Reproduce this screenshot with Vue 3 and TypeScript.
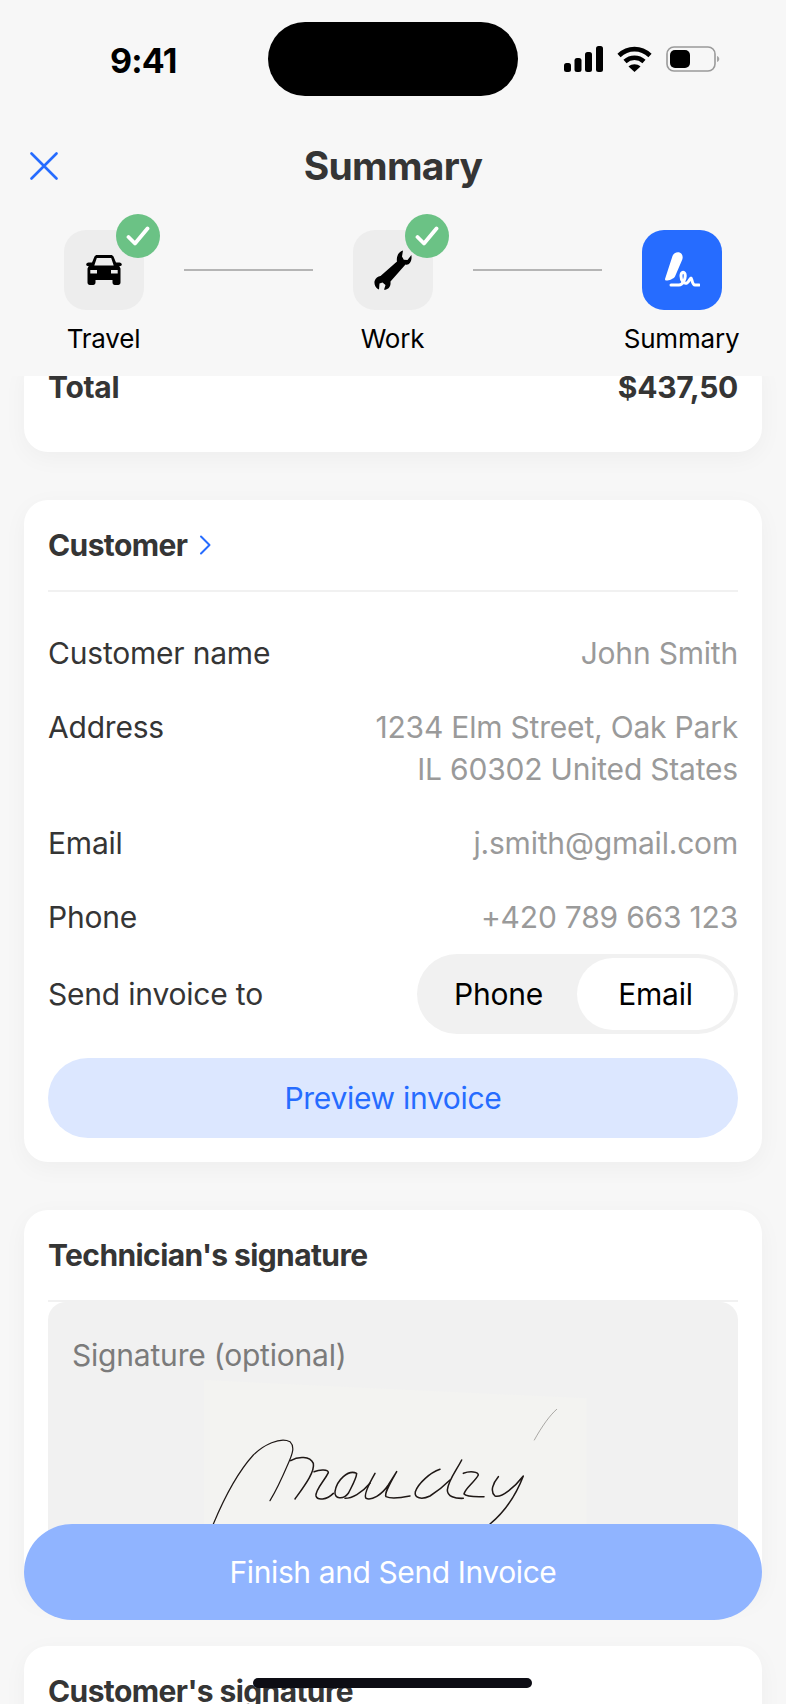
<script setup lang="ts">
interface Step {
  label: string
  done: boolean
}

interface InfoRow {
  label: string
  lines: string[]
}

const steps: Step[] = [
  { label: 'Travel', done: true },
  { label: 'Work', done: true },
  { label: 'Summary', done: false },
]

const customerRows: InfoRow[] = [
  { label: 'Customer name', lines: ['John Smith'] },
  { label: 'Address', lines: ['1234 Elm Street, Oak Park', 'IL 60302 United States'] },
  { label: 'Email', lines: ['j.smith@gmail.com'] },
  { label: 'Phone', lines: ['+420 789 663 123'] },
]
</script>

<template>
  <div class="screen">
    <header class="top">
      <div class="status">
        <span class="status__time">9:41</span>
        <div class="status__island"></div>
        <div class="status__icons">
          <svg width="39" height="26" viewBox="0 0 39 26" fill="#000">
            <rect x="0" y="17" width="7" height="9" rx="2.5" />
            <rect x="10.5" y="12" width="7" height="14" rx="2.5" />
            <rect x="21" y="6" width="7" height="20" rx="2.5" />
            <rect x="32" y="0" width="7" height="26" rx="2.5" />
          </svg>
          <svg width="35" height="26" viewBox="0 0 35 26" fill="none" stroke="#000" stroke-width="4.6">
            <path d="M2 9.5C11 1 24 1 33 9.5" />
            <path d="M8 15.5C13.5 10.5 21.5 10.5 27 15.5" />
            <path d="M17.5 26L11.5 20.5C15 17.5 20 17.5 23.5 20.500Z" fill="#000" stroke="none" />
          </svg>
          <svg width="55" height="26" viewBox="0 0 55 26" fill="none">
            <rect x="1" y="1" width="48" height="24" rx="7" stroke="#9a9a9a" stroke-width="1.6" fill="none" />
            <rect x="4" y="4" width="20" height="18" rx="5" fill="#000" />
            <path d="M51 10C54 11 54 15 51 16Z" fill="#a5a5a5" />
          </svg>
        </div>
      </div>

      <div class="nav">
        <svg class="nav__close" width="28" height="28" viewBox="0 0 28 28" fill="none" stroke="#266cff" stroke-width="2.6" stroke-linecap="round">
          <path d="M1.500 1.500L26.500 26.500M26.500 1.500L1.500 26.500" />
        </svg>
        <h1 class="nav__title">Summary</h1>
      </div>

      <div class="steps">
        <template v-for="(step, i) in steps" :key="step.label">
          <div class="step">
            <div class="step__tile" :class="{ 'step__tile--active': !step.done }">
              <svg v-if="i === 0" width="36" height="30" viewBox="0 0 36 30" fill="#000">
                <path d="M8.500 1.500C9 .6 10 0 11 0H25C26 0 27 .6 27.500 1.500L30 7.500H33.500C34.800 7.500 35.800 8.500 35.800 9.500C35.800 10.500 34.800 11 33.500 11H33.300L34.500 13.500V27.500C34.500 29 33.500 30 32.200 30H28.800C27.500 30 26.500 29 26.500 27.500V25H9.500V27.500C9.500 29 8.500 30 7.200 30H3.800C2.500 30 1.500 29 1.500 27.500V13.500L2.700 11H2.500C1.200 11 .2 10.500 .2 9.500C.2 8.500 1.200 7.500 2.500 7.500H6ZM10.800 3L8.300 10.500H27.700L25.200 3ZM4.300 15V18.500H11V15ZM25 15V18.500H31.700V15Z" fill-rule="evenodd" />
              </svg>
              <svg v-else-if="i === 1" width="38" height="40" viewBox="0 0 38 40" fill="#000">
                <path d="M29 .5C26 1.500 23.500 4 23 7.500C22.700 9.500 22.800 10.500 23 11.500L6.500 26C4 26.500 1.500 28 .6 31C0 33.800 1 37 3.500 38.800L5 39.500L5.500 33.500L8.500 32.500L11.500 35L10 39.800C13.500 40 16.200 37.500 16.500 34C16.600 32.800 16.500 32 16.500 31.500L31.500 14.500C33 15 35 14.500 36 12.800C37.500 10.500 37.800 8 37.400 5L33.500 10L29.800 9.800L28 6.500Z" />
              </svg>
              <svg v-else width="36" height="36" viewBox="0 0 36 36" fill="none">
                <path d="M8.500 4C9.500 1 13.500 -.5 16 .8C18.500 2 19.200 5 18.300 7.500L11 24.500C9.500 27 5 28.500 2.500 28.500C1.500 28.500 1 28 1 27Z" fill="#fff" />
                <path d="M7 33H15C19 33 22 26 21 22C20 19 17 20 17 24C17 29 20 32 23 31C25 30 26 26 27 26C28 26 28 33 31 33H35" stroke="#fff" stroke-width="3" stroke-linecap="round" stroke-linejoin="round" />
              </svg>
              <span v-if="step.done" class="step__check">
                <svg width="24" height="20" viewBox="0 0 24 20" fill="none" stroke="#fff" stroke-width="3.800" stroke-linecap="round" stroke-linejoin="round">
                  <path d="M2.500 11L9 17.500L21.500 2.500" />
                </svg>
              </span>
            </div>
            <span class="step__label">{{ step.label }}</span>
          </div>
          <div v-if="i < steps.length - 1" class="steps__line"></div>
        </template>
      </div>
    </header>

    <main class="scroller">
      <section class="card card--total">
        <div class="total">
          <span>Total</span>
          <span>$437,50</span>
        </div>
      </section>

      <section class="card">
        <div class="card__head">
          <h2 class="card__title">Customer</h2>
          <svg width="12" height="20" viewBox="0 0 12 20" fill="none" stroke="#266cff" stroke-width="2" stroke-linecap="round" stroke-linejoin="round">
            <path d="M2 1.500L10.500 10L2 18.500" />
          </svg>
        </div>

        <div class="rows">
          <div v-for="row in customerRows" :key="row.label" class="row">
            <span class="row__label">{{ row.label }}</span>
            <span class="row__value">
              <span v-for="line in row.lines" :key="line" class="row__line">{{ line }}</span>
            </span>
          </div>
          <div class="row row--send">
            <span class="row__label">Send invoice to</span>
            <div class="segment">
              <span class="segment__item">Phone</span>
              <span class="segment__item segment__item--on">Email</span>
            </div>
          </div>
        </div>

        <button class="preview" type="button">Preview invoice</button>
      </section>

      <section class="card">
        <div class="card__head">
          <h2 class="card__title">Technician's signature</h2>
        </div>
        <div class="sign">
          <span class="sign__label">Signature (optional)</span>
          <svg class="sign__pic" width="400" height="150" viewBox="0 0 1200 450" fill="none" stroke="#1f1816" stroke-width="4.600" stroke-linecap="round" stroke-linejoin="round">
            <path d="M42 0L1190 55V450H42Z" fill="#f3f3f1" stroke="none" />
            <g transform="translate(30 150)">
              <path d="M40 282C70 210 110 130 160 75C190 45 240 20 270 35C285 50 278 70 265 100C250 135 230 180 210 212" stroke-width="3.600" />
              <path d="M272 92C295 78 330 78 340 100C345 125 315 165 285 207" />
              <path d="M342 125C360 118 385 118 385 128C375 150 345 180 348 198C352 212 380 210 400 190" />
              <path d="M470 130C445 118 410 150 405 185C402 207 430 210 445 190C455 170 470 145 470 130Z" />
              <path d="M435 205C455 205 485 190 510 160" />
              <path d="M525 130C505 165 490 195 498 205C515 212 545 195 565 165L590 125C570 160 552 190 558 200C575 208 605 203 630 198" />
              <path d="M720 118C690 128 655 160 646 185C642 205 665 210 690 198C715 182 735 165 750 150" />
              <path d="M785 90C770 120 745 150 742 180C742 200 765 206 790 205" />
              <path d="M790 130C810 122 835 125 835 135C825 155 795 175 792 192C800 202 830 200 852 200" />
              <path d="M895 140C878 160 870 185 885 198C905 205 945 170 970 138C950 190 915 245 870 282" />
            </g>
            <path d="M1100 88C1080 105 1055 140 1033 180" stroke-width="1.400" stroke="#55504c" />
          </svg>
        </div>
      </section>

      <section class="card">
        <div class="card__head">
          <h2 class="card__title">Customer's signature</h2>
        </div>
      </section>
    </main>

    <button class="finish" type="button">Finish and Send Invoice</button>
    <div class="home-bar"></div>
  </div>
</template>

<style>
html,
body {
  margin: 0;
  background: #f7f7f7;
}
</style>

<style scoped>
.screen {
  position: relative;
  width: 786px;
  height: 1704px;
  overflow: hidden;
  background: #f7f7f7;
  font-family: Inter, "Liberation Sans", sans-serif;
  color: #353535;
}

.top {
  height: 376px;
  box-sizing: border-box;
}

.status {
  display: flex;
  align-items: flex-start;
  height: 122px;
  padding-top: 22px;
  box-sizing: border-box;
}

.status__time {
  width: 268px;
  box-sizing: border-box;
  padding: 19px 0 0 110px;
  font-size: 34px;
  line-height: 40px;
  font-weight: 700;
  letter-spacing: -0.8px;
  color: #000;
}

.status__island {
  width: 250px;
  height: 74px;
  border-radius: 37px;
  background: #000;
}

.status__icons {
  display: flex;
  gap: 14px;
  margin: 24px 0 0 46px;
}

.nav {
  position: relative;
  display: flex;
  justify-content: center;
  align-items: center;
  height: 88px;
}

.nav__close {
  position: absolute;
  left: 30px;
  top: 30px;
}

.nav__title {
  margin: 0;
  font-size: 39px;
  line-height: 44px;
  font-weight: 700;
  letter-spacing: -0.7px;
  color: #353535;
}

.steps {
  display: flex;
  align-items: flex-start;
  justify-content: space-between;
  padding: 20px 48px 0 47px;
}

.step {
  display: flex;
  flex-direction: column;
  align-items: center;
  width: 113px;
  gap: 13px;
}

.step__tile {
  position: relative;
  display: flex;
  align-items: center;
  justify-content: center;
  width: 80px;
  height: 80px;
  border-radius: 22px;
  background: #ededed;
}

.step__tile--active {
  background: #266cff;
}

.step__check {
  position: absolute;
  top: -16px;
  right: -16px;
  display: flex;
  align-items: center;
  justify-content: center;
  width: 44px;
  height: 44px;
  border-radius: 50%;
  background: #6bc285;
}

.step__label {
  font-size: 26px;
  line-height: 32px;
  letter-spacing: -0.2px;
  color: #000;
  white-space: nowrap;
}

.steps__line {
  width: 129px;
  height: 2px;
  margin-top: 39px;
  background: #b5b5b5;
}

.scroller {
  display: flex;
  flex-direction: column;
  gap: 48px;
  height: 1328px;
  overflow: hidden;
  padding: 0 24px;
  box-sizing: border-box;
}

.card {
  flex: none;
  padding: 0 24px 24px;
  border-radius: 24px;
  background: #fff;
  box-shadow: 0 6px 24px rgba(0, 0, 0, 0.04);
}

.card--total {
  margin-top: -20px;
  height: 96px;
  box-sizing: border-box;
}

.total {
  display: flex;
  justify-content: space-between;
  padding-top: 16px;
  font-size: 30px;
  line-height: 30px;
  font-weight: 700;
  letter-spacing: -0.3px;
}

.card__head {
  display: flex;
  align-items: center;
  gap: 12px;
  height: 90px;
  border-bottom: 2px solid #f1f1f1;
}

.card__title {
  margin: 0;
  font-size: 30px;
  line-height: 36px;
  font-weight: 700;
  letter-spacing: -0.6px;
  color: #353535;
}

.rows {
  display: flex;
  flex-direction: column;
  padding-top: 40px;
}

.row {
  display: flex;
  justify-content: space-between;
  padding-bottom: 32px;
  font-size: 30px;
  line-height: 42px;
  letter-spacing: -0.2px;
}

.row__label {
  color: #353535;
}

.row__value {
  display: flex;
  flex-direction: column;
  align-items: flex-end;
  color: #9a9a9a;
}

.row--send {
  align-items: center;
  padding-bottom: 24px;
  margin-top: -16px;
}

.segment {
  display: grid;
  grid-template-columns: 160px 157px;
  width: 321px;
  height: 80px;
  padding: 4px 4px 4px 0;
  box-sizing: border-box;
  border-radius: 40px;
  background: #f1f1f1;
}

.segment__item {
  display: flex;
  align-items: center;
  justify-content: center;
  padding-left: 3px;
  border-radius: 36px;
  color: #000;
}

.segment__item--on {
  padding-left: 0;
  background: #fff;
}

.preview {
  display: block;
  width: 100%;
  height: 80px;
  padding: 0;
  border: 0;
  border-radius: 40px;
  background: #dce7ff;
  color: #266cff;
  font: inherit;
  font-size: 30px;
  letter-spacing: -0.3px;
}

.sign {
  display: flex;
  flex-direction: column;
  height: 272px;
  overflow: hidden;
  border-radius: 18px;
  background: #f1f1f1;
}

.sign__label {
  padding: 32px 0 4px 24px;
  font-size: 30px;
  line-height: 42px;
  letter-spacing: -0.2px;
  color: #7b7b7b;
}

.sign__pic {
  flex: none;
  display: block;
  margin: 0 0 0 142px;
}

.finish {
  position: absolute;
  left: 24px;
  right: 24px;
  top: 1524px;
  height: 96px;
  padding: 0;
  border: 0;
  border-radius: 48px;
  background: #90b4ff;
  color: #fff;
  font: inherit;
  font-size: 30px;
  letter-spacing: -0.4px;
}

.home-bar {
  position: absolute;
  left: 253px;
  top: 1678px;
  width: 279px;
  height: 10px;
  border-radius: 5px;
  background: #0d0d14;
}
</style>
